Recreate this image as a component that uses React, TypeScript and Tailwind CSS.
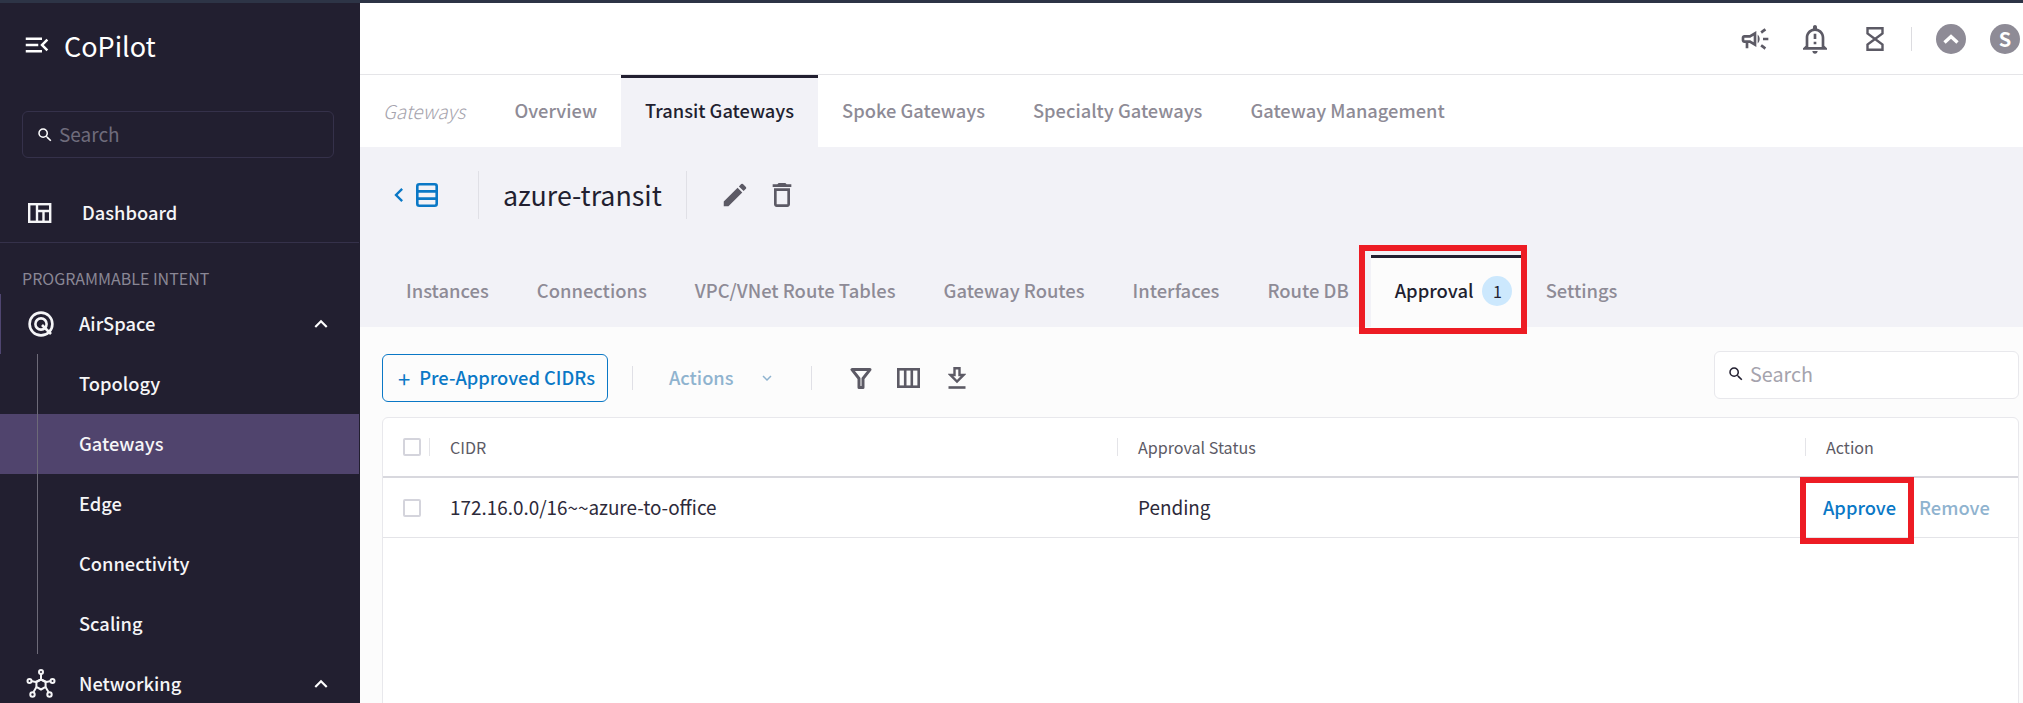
// App.tsx - CoPilot gateway approval view
import {
  MdChevronLeft,
  MdEdit,
  MdExpandLess,
  MdExpandMore,
  MdOutlineCampaign,
  MdOutlineDeleteOutline,
  MdOutlineMenuOpen,
  MdOutlineNotificationImportant,
  MdSearch,
} from "react-icons/md";

const navTabs = ["Overview", "Transit Gateways", "Spoke Gateways", "Specialty Gateways", "Gateway Management"];
const subTabs = ["Instances", "Connections", "VPC/VNet Route Tables", "Gateway Routes", "Interfaces", "Route DB"];
const subItems = ["Topology", "Gateways", "Edge", "Connectivity", "Scaling"];

function DashboardIcon() {
  return (
    <svg width="24" height="20" viewBox="0 0 24 20" fill="none" stroke="currentColor" strokeWidth="2.4">
      <rect x="1.2" y="1.2" width="21" height="17.6" />
      <path d="M9 1.2V18.8M9 8H22.2M15.5 8V18.8" />
    </svg>
  );
}

function AirSpaceIcon() {
  return (
    <svg width="26" height="26" viewBox="0 0 26 26" fill="none" stroke="currentColor" strokeWidth="2.6">
      <circle cx="13" cy="13" r="11.4" />
      <circle cx="13" cy="13" r="5.6" />
      <path d="M14 14L23 23" />
    </svg>
  );
}

function NetworkIcon() {
  return (
    <svg width="30" height="30" viewBox="0 0 30 30" fill="none" stroke="currentColor" strokeWidth="2">
      <path d="M15 4.5L15 10.5L9.5 13L5 12M15 10.5L20.5 13L25 12M10.5 18L7.5 23M19.5 18L22.5 23" />
      <path d="M15 10.5L19.6 13V18L15 20.5L10.4 18V13Z" />
      <circle cx="15" cy="3" r="2" />
      <circle cx="3.5" cy="12" r="2" />
      <circle cx="26.5" cy="12" r="2" />
      <circle cx="6.5" cy="25.5" r="2.2" />
      <circle cx="23.5" cy="25.5" r="2.2" />
    </svg>
  );
}

function StackIcon() {
  return (
    <svg width="22" height="24" viewBox="0 0 22 24" fill="none" stroke="currentColor" strokeWidth="2.6">
      <rect x="1.3" y="1.3" width="19.4" height="21.4" rx="2" />
      <path d="M1.3 8.4H20.7M1.3 15.6H20.7" />
    </svg>
  );
}

function HourglassIcon() {
  return (
    <svg width="18" height="24" viewBox="0 0 18 24" fill="none" stroke="currentColor" strokeWidth="2.4">
      <path d="M1.5 1.2H16.5V6.5L9 12L16.5 17.5V22.8H1.5V17.5L9 12L1.5 6.5Z" />
    </svg>
  );
}

function FilterIcon() {
  return (
    <svg width="22" height="21" viewBox="0 0 22 21" fill="none" stroke="currentColor" strokeWidth="3" strokeLinejoin="round">
      <path d="M2 1.6H20L13 10.5V19.4H9V10.5Z" />
    </svg>
  );
}

function ColumnsIcon() {
  return (
    <svg width="23" height="20" viewBox="0 0 23 20" fill="none" stroke="currentColor" strokeWidth="2.6">
      <rect x="1.3" y="1.3" width="20.4" height="17.4" />
      <path d="M8.2 1.3V18.7M14.8 1.3V18.7" />
    </svg>
  );
}

function DownloadIcon() {
  return (
    <svg width="18" height="22" viewBox="0 0 18 22" fill="none" stroke="currentColor" strokeWidth="2.4">
      <path d="M6.5 1.2H11.5V8H15.5L9 14.5L2.5 8H6.5Z" />
      <path d="M0.5 20.5H17.5" strokeWidth="2.6" />
    </svg>
  );
}

function Checkbox() {
  return <div className="h-[18px] w-[18px] rounded-[2px] border-2 border-[#d4d4dc] bg-white" />;
}

function SideRow({ icon, label, open, iconWidth }: { icon: React.ReactNode; label: string; open?: boolean; iconWidth: string }) {
  return (
    <div className="flex h-[60px] items-center text-[18.3px] font-medium text-[#f5f5f7]">
      <div className={`flex ${iconWidth} justify-center pl-[2px]`}>{icon}</div>
      <span>{label}</span>
      {open && <MdExpandLess className="ml-auto mr-[26px] text-[26px] text-white" />}
    </div>
  );
}

export default function App() {
  return (
    <div className="flex h-[703px] w-[2023px] flex-col overflow-hidden bg-white font-['Noto_Sans_CJK_KR',sans-serif]">
      <div className="h-[3px] shrink-0 bg-[#2d3446]" />
      <div className="flex min-h-0 flex-1">
        {/* sidebar */}
        <aside className="w-[360px] shrink-0 bg-[#221f30]">
          <div className="flex h-[86px] items-center pl-[22px] pb-[2px] text-white">
            <MdOutlineMenuOpen className="text-[30px]" />
            <span className="ml-[12px] text-[27px] leading-none">CoPilot</span>
          </div>
          <div className="mx-[22px] mt-[22px] flex h-[47px] w-[312px] items-center rounded-[6px] border border-[#35314a] pl-[13px] text-[19px] text-[#6f6c7c]">
            <MdSearch className="text-[18px] text-white" />
            <span className="ml-[5px]">Search</span>
          </div>
          <div className="mt-[25px] flex h-[60px] w-[359px] items-center border-b border-[#35314a] text-[18.3px] font-medium text-[#f5f5f7]">
            <div className="flex w-[82px] justify-center pr-[2px]">
              <DashboardIcon />
            </div>
            <span>Dashboard</span>
          </div>
          <div className="flex h-[51px] items-end pb-[6px] pl-[22px] text-[16px] leading-5 text-[#8a8795]">
            PROGRAMMABLE INTENT
          </div>
          <div className="border-l border-[#4f4570]">
            <SideRow icon={<AirSpaceIcon />} label="AirSpace" open iconWidth="w-[78px]" />
          </div>
          <div className="relative w-[359px]">
            {subItems.map((item) => (
              <div
                key={item}
                className={
                  item === "Gateways"
                    ? "flex h-[60px] items-center bg-[#50446d] pl-[79px] text-[18.3px] font-medium text-[#f5f5f7]"
                    : "flex h-[60px] items-center pl-[79px] text-[18.3px] font-medium text-[#f5f5f7]"
                }
              >
                {item}
              </div>
            ))}
            <div className="absolute bottom-0 left-[37px] top-0 w-px bg-[#6d6a78]" />
          </div>
          <SideRow icon={<NetworkIcon />} label="Networking" open iconWidth="w-[79px]" />
        </aside>

        {/* main */}
        <main className="flex min-w-0 flex-1 flex-col">
          <header className="flex h-[72px] shrink-0 items-center justify-end border-b border-[#e5e5e8] pr-[3px] text-[#5c5a65]">
            <MdOutlineCampaign className="text-[32px]" />
            <MdOutlineNotificationImportant className="ml-[28px] text-[32px]" />
            <div className="ml-[35px]">
              <HourglassIcon />
            </div>
            <div className="ml-[27px] h-[24px] w-px bg-[#dcdce0]" />
            <div className="ml-[24px] flex h-[30px] w-[30px] items-center justify-center rounded-full bg-[#8e8b96] text-white">
              <svg width="16" height="10" viewBox="0 0 16 10" fill="none" stroke="currentColor" strokeWidth="3.4">
                <path d="M1.5 8.5L8 2.5L14.5 8.5" />
              </svg>
            </div>
            <div className="ml-[24px] flex h-[30px] w-[30px] items-center justify-center rounded-full bg-[#8e8b96] text-[20px] font-bold text-white">
              S
            </div>
          </header>

          <nav className="flex h-[72px] shrink-0 items-stretch pl-[23px] text-[18.3px] font-medium text-[#8e8b96]">
            <span className="flex items-center pr-[25px] text-[19px] font-light italic text-[#a5a3ad]">Gateways</span>
            {navTabs.map((tab) =>
              tab === "Transit Gateways" ? (
                <span key={tab} className="flex items-center border-t-[3px] border-[#221f30] bg-[#f2f2f7] px-[24px] pb-[3px] text-[#221f30]">
                  {tab}
                </span>
              ) : (
                <span key={tab} className="flex items-center px-[24px]">
                  {tab}
                </span>
              ),
            )}
          </nav>

          <section className="h-[180px] shrink-0 bg-[#f2f2f7] pt-[24px]">
            <div className="flex h-[48px] items-center pl-[25px]">
              <MdChevronLeft className="text-[28px] text-[#0a78c6]" />
              <div className="ml-[3px] text-[#0a78c6]">
                <StackIcon />
              </div>
              <div className="ml-[40px] h-[48px] w-px bg-[#e0e0e6]" />
              <span className="ml-[24px] text-[26.8px] text-[#221f30]">azure-transit</span>
              <div className="ml-[24px] h-[48px] w-px bg-[#e0e0e6]" />
              <MdEdit className="ml-[33px] text-[30px] text-[#5c5a65]" />
              <MdOutlineDeleteOutline className="ml-[16px] text-[32px] text-[#5c5a65]" />
            </div>
            <div className="mt-[36px] flex h-[72px] items-stretch pl-[22px] text-[18.4px] font-medium text-[#8e8b96]">
              {subTabs.map((tab) => (
                <span key={tab} className="flex items-center px-[24px]">
                  {tab}
                </span>
              ))}
              <span className="relative ml-[-2px] flex w-[150px] items-center border-t-[3px] border-[#221f30] bg-[#fcfcfc] pb-[3px] pl-[24px] text-[#221f30]">
                Approval
                <span className="ml-[9px] flex h-[30px] w-[30px] items-center justify-center rounded-full bg-[#cce8fd] text-[16px] font-normal">
                  1
                </span>
                <span className="absolute bottom-[-7px] left-[-12px] right-[-6px] top-[-13px] border-[6px] border-[#ed1c24]" />
              </span>
              <span className="flex items-center px-[25px]">Settings</span>
            </div>
          </section>

          <section className="min-h-0 flex-1 bg-[#fcfcfc] pl-[22px] pr-[4px]">
            <div className="flex h-[90px] items-start pt-[27px]">
              <button className="flex h-[48px] w-[226px] items-center rounded-[6px] border border-[#0a78c6] pl-[15px] text-[18.3px] font-medium whitespace-nowrap text-[#0a78c6]">
                <span className="text-[22px] font-normal">+</span>
                <span className="ml-[9px]">Pre-Approved CIDRs</span>
              </button>
              <div className="ml-[24px] mt-[12px] h-[24px] w-px bg-[#e0e0e6]" />
              <span className="ml-[36px] mt-[10px] text-[18.3px] font-medium text-[#8fb3cf]">Actions</span>
              <MdExpandMore className="ml-[24px] mt-[15px] text-[18px] text-[#8fb3cf]" />
              <div className="ml-[35px] mt-[12px] h-[24px] w-px bg-[#e0e0e6]" />
              <div className="ml-[38px] mt-[14px] text-[#5c5a65]">
                <FilterIcon />
              </div>
              <div className="ml-[25px] mt-[14px] text-[#5c5a65]">
                <ColumnsIcon />
              </div>
              <div className="ml-[28px] mt-[13px] text-[#5c5a65]">
                <DownloadIcon />
              </div>
              <div className="ml-auto -mt-[3px] flex h-[48px] w-[305px] items-center rounded-[6px] border border-[#e8e8ec] bg-white pb-[2px] pl-[12px] text-[19.8px] text-[#a5a3ad]">
                <MdSearch className="text-[18px] text-[#221f30]" />
                <span className="ml-[5px]">Search</span>
              </div>
            </div>

            <div className="h-[300px] rounded-t-[6px] border border-[#e8e8ec] bg-white">
              <div className="grid h-[60px] grid-cols-[46px_688px_688px_1fr] items-center border-b-2 border-[#d8d8de] text-[16.1px] text-[#5c5a65]">
                <div className="flex justify-end pr-[8px]">
                  <Checkbox />
                </div>
                <div className="border-l border-[#e4e4e8] pl-[20px] leading-[18px]">CIDR</div>
                <div className="border-l border-[#e4e4e8] pl-[20px] leading-[18px]">Approval Status</div>
                <div className="border-l border-[#e4e4e8] pl-[20px] leading-[18px]">Action</div>
              </div>
              <div className="grid h-[60px] grid-cols-[46px_688px_688px_1fr] items-center border-b border-[#e4e4e8] text-[18.9px] text-[#2d2a3a]">
                <div className="flex justify-end pr-[8px]">
                  <Checkbox />
                </div>
                <div className="pl-[21px]">172.16.0.0/16~~azure-to-office</div>
                <div className="pl-[21px]">Pending</div>
                <div className="flex items-center pl-[18px] text-[18.3px] font-medium">
                  <span className="relative text-[#0a78c6]">
                    Approve
                    <span className="absolute bottom-[-23px] left-[-23px] right-[-18px] top-[-17px] border-[6px] border-[#ed1c24]" />
                  </span>
                  <span className="ml-[23px] text-[#8fb3cf]">Remove</span>
                </div>
              </div>
            </div>
          </section>
        </main>
      </div>
    </div>
  );
}
